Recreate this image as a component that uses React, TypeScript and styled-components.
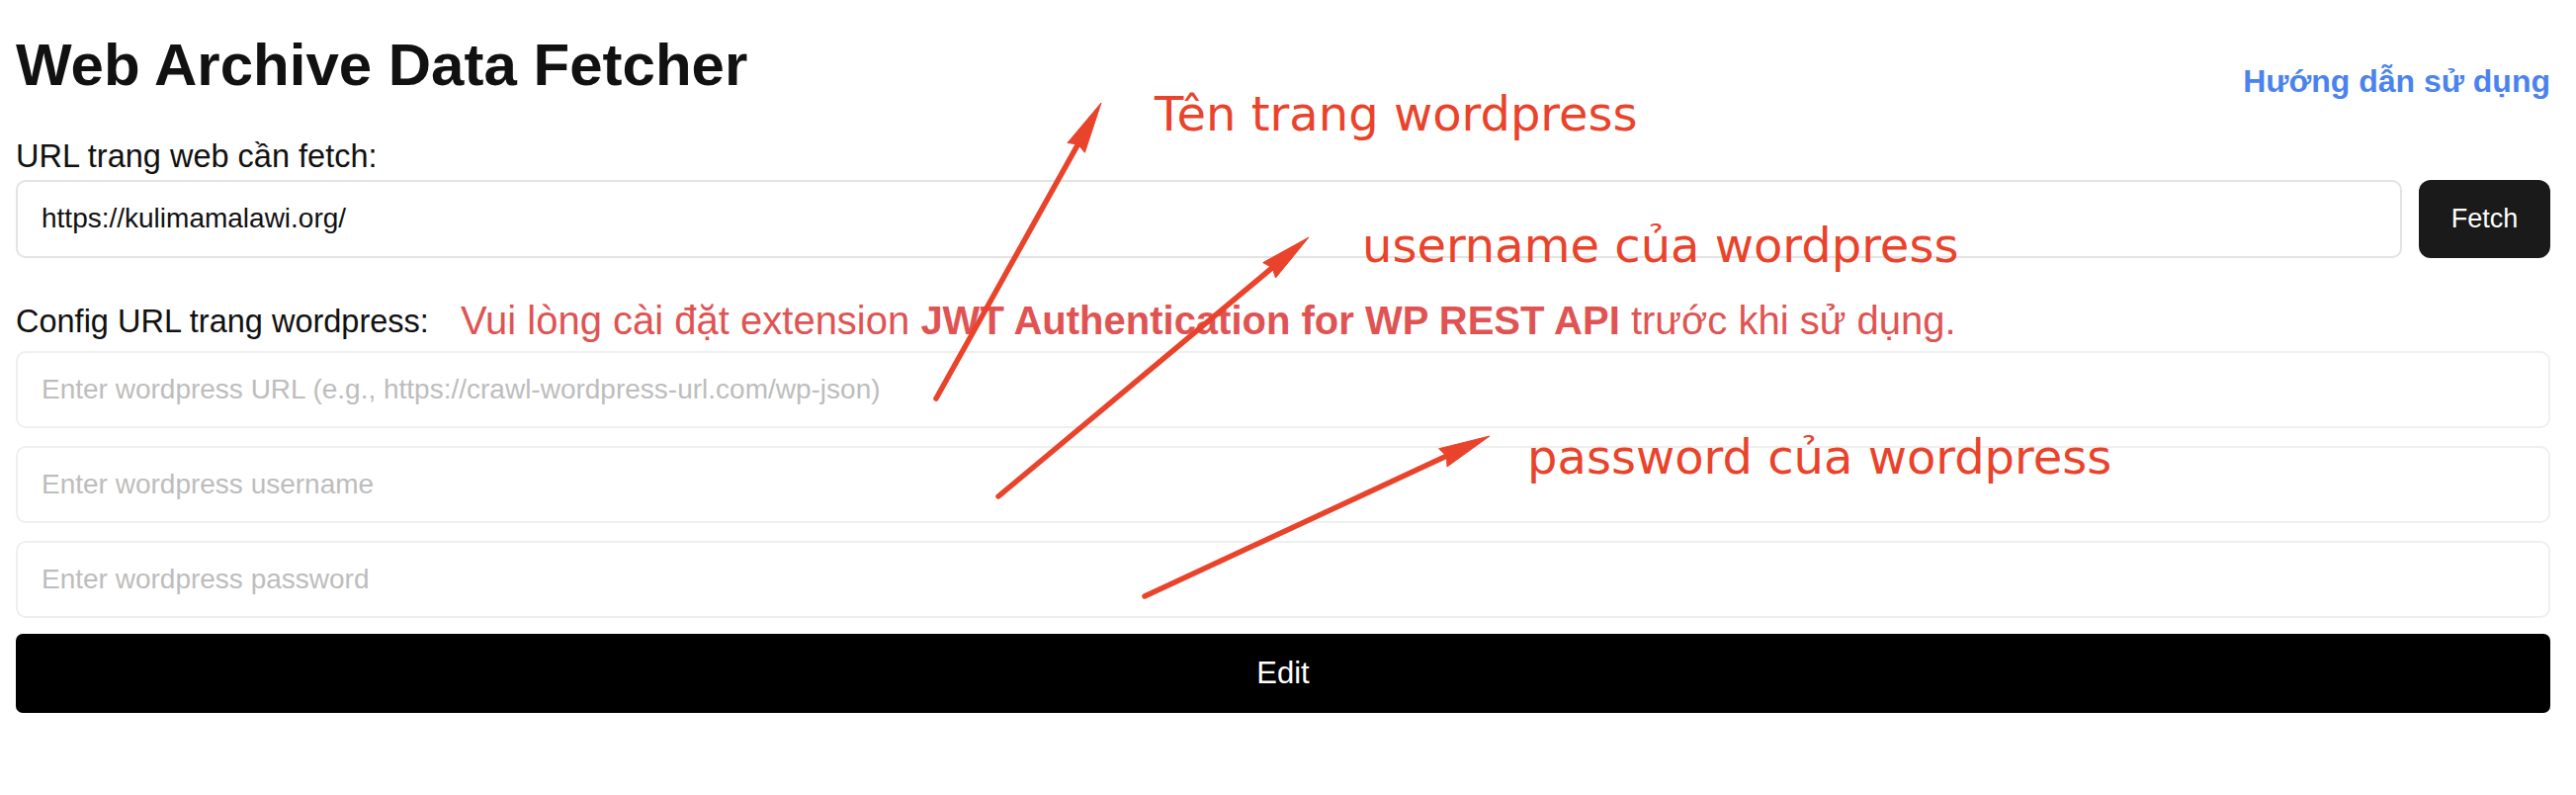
import React from "react";
import styled, { createGlobalStyle } from "styled-components";

const GlobalStyle = createGlobalStyle`
  html, body {
    margin: 0;
    padding: 0;
    background: #ffffff;
  }
  body {
    font-family: "Liberation Sans", Arial, Helvetica, sans-serif;
    color: #111111;
  }
  * { box-sizing: border-box; }
`;

const Page = styled.div`
  position: relative;
  width: 2606px;
  min-height: 804px;
  padding: 36px 26px 0 16px;
`;

const Header = styled.header`
  display: flex;
  justify-content: space-between;
  align-items: flex-start;
`;

const Title = styled.h1`
  margin: 0;
  font-size: 60px;
  line-height: 60px;
  font-weight: 700;
  color: #111111;
`;

const GuideLink = styled.a`
  margin-top: 30px;
  font-size: 32px;
  line-height: 32px;
  font-weight: 700;
  color: #4b83ee;
  text-decoration: none;
`;

const FieldLabel = styled.label<{ $top?: number; $bottom?: number }>`
  display: block;
  margin-top: ${(p) => p.$top ?? 0}px;
  margin-bottom: ${(p) => p.$bottom ?? 0}px;
  font-size: 32.5px;
  line-height: 32.5px;
  color: #111111;
  white-space: nowrap;
`;

const FetchRow = styled.div`
  display: flex;
  gap: 17px;
  margin-top: 7px;
`;

const TextInput = styled.input<{ $border: string; $h: number }>`
  display: block;
  width: 100%;
  height: ${(p) => p.$h}px;
  padding: 0 24px;
  border: 2px solid ${(p) => p.$border};
  border-radius: 10px;
  background: #ffffff;
  font-family: "Liberation Sans", Arial, sans-serif;
  font-size: 28px;
  color: #111111;
  outline: none;
  &::placeholder {
    color: #bdbdbd;
  }
`;

const UrlInput = styled(TextInput)`
  flex: 1;
  min-width: 0;
`;

const FetchButton = styled.button`
  flex: none;
  width: 133px;
  height: 79px;
  border: none;
  border-radius: 12px;
  background: #1a1a1a;
  color: #ffffff;
  font-family: "Liberation Sans", Arial, sans-serif;
  font-size: 27px;
`;

const ConfigRow = styled.div`
  display: flex;
  align-items: flex-end;
  gap: 32px;
  margin-top: 43px;
`;

const Warning = styled.p`
  margin: 0;
  font-size: 40px;
  line-height: 40px;
  color: #df5453;
  white-space: nowrap;
  strong {
    font-weight: 700;
  }
`;

const ConfigFields = styled.div`
  display: flex;
  flex-direction: column;
  gap: 18px;
  margin-top: 11px;
`;

const EditButton = styled.button`
  width: 100%;
  height: 80px;
  margin-top: -2px;
  border: none;
  border-radius: 7px;
  background: #000000;
  color: #ffffff;
  font-family: "Liberation Sans", Arial, sans-serif;
  font-size: 31px;
`;

const Overlay = styled.svg`
  position: absolute;
  top: 0;
  left: 0;
  pointer-events: none;
`;

const Note = styled.span<{ $x: number; $y: number }>`
  position: absolute;
  left: ${(p) => p.$x}px;
  top: ${(p) => p.$y}px;
  font-family: "DejaVu Sans", Verdana, sans-serif;
  font-size: 48px;
  line-height: 48px;
  color: #e9432b;
  white-space: nowrap;
  pointer-events: none;
`;

type Pt = [number, number];

const ARROWS: { from: Pt; to: Pt }[] = [
  { from: [947, 403], to: [1114, 104] },
  { from: [1010, 502], to: [1324, 240] },
  { from: [1158, 603], to: [1507, 441] },
];

const ARROW_COLOR = "#e9432b";

function Arrow({ from, to }: { from: Pt; to: Pt }) {
  const dx = to[0] - from[0];
  const dy = to[1] - from[1];
  const len = Math.hypot(dx, dy);
  const ux = dx / len;
  const uy = dy / len;
  const nx = -uy;
  const ny = ux;
  const L = 52;
  const W = 10;
  const N = 4;
  const bx = to[0] - ux * L;
  const by = to[1] - uy * L;
  const w1: Pt = [bx + nx * W, by + ny * W];
  const w2: Pt = [bx - nx * W, by - ny * W];
  const notch: Pt = [to[0] - ux * (L - N), to[1] - uy * (L - N)];
  const shaftEnd: Pt = [to[0] - ux * (L - N - 2), to[1] - uy * (L - N - 2)];
  const pts = [to, w1, notch, w2].map((p) => `${p[0].toFixed(1)},${p[1].toFixed(1)}`).join(" ");
  return (
    <g>
      <line
        x1={from[0]}
        y1={from[1]}
        x2={shaftEnd[0]}
        y2={shaftEnd[1]}
        stroke={ARROW_COLOR}
        strokeWidth={5.5}
        strokeLinecap="round"
      />
      <polygon points={pts} fill={ARROW_COLOR} stroke={ARROW_COLOR} strokeWidth={1} strokeLinejoin="round" />
    </g>
  );
}

export default function App() {
  return (
    <>
      <GlobalStyle />
      <Page>
        <Header>
          <Title>Web Archive Data Fetcher</Title>
          <GuideLink href="#">Hướng dẫn sử dụng</GuideLink>
        </Header>

        <FieldLabel $top={44}>URL trang web cần fetch:</FieldLabel>
        <FetchRow>
          <UrlInput $border="#e3e3e3" $h={79} defaultValue="https://kulimamalawi.org/" />
          <FetchButton>Fetch</FetchButton>
        </FetchRow>

        <ConfigRow>
          <FieldLabel $bottom={2}>Config URL trang wordpress:</FieldLabel>
          <Warning>
            Vui lòng cài đặt extension <strong>JWT Authentication for WP REST API</strong> trước khi sử dụng.
          </Warning>
        </ConfigRow>

        <ConfigFields>
          <TextInput
            $border="#efefef"
            $h={78}
            placeholder="Enter wordpress URL (e.g., https://crawl-wordpress-url.com/wp-json)"
          />
          <TextInput $border="#efefef" $h={78} placeholder="Enter wordpress username" />
          <TextInput $border="#efefef" $h={78} type="password" placeholder="Enter wordpress password" />
          <EditButton>Edit</EditButton>
        </ConfigFields>

        <Overlay width={2606} height={804} viewBox="0 0 2606 804">
          {ARROWS.map((a, i) => (
            <Arrow key={i} from={a.from} to={a.to} />
          ))}
        </Overlay>
        <Note $x={1168} $y={91}>Tên trang wordpress</Note>
        <Note $x={1378} $y={224}>username của wordpress</Note>
        <Note $x={1545} $y={438}>password của wordpress</Note>
      </Page>
    </>
  );
}
